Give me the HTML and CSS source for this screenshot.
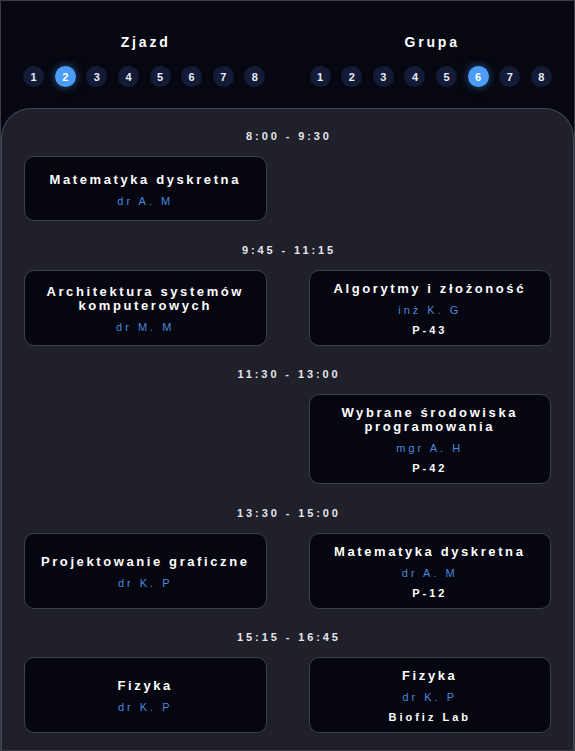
FILE: index.html
```html
<!DOCTYPE html>
<html lang="pl">
<head>
<meta charset="utf-8">
<title>Plan zajęć</title>
<link rel="stylesheet" href="styles.css">
</head>
<body>
<div class="app">
  <header class="picker">
    <div class="picker-col">
      <div class="picker-title">Zjazd</div>
      <div class="dots">
        <span class="dot">1</span><span class="dot active">2</span><span class="dot">3</span><span class="dot">4</span><span class="dot">5</span><span class="dot">6</span><span class="dot">7</span><span class="dot">8</span>
      </div>
    </div>
    <div class="picker-col">
      <div class="picker-title">Grupa</div>
      <div class="dots">
        <span class="dot">1</span><span class="dot">2</span><span class="dot">3</span><span class="dot">4</span><span class="dot">5</span><span class="dot active">6</span><span class="dot">7</span><span class="dot">8</span>
      </div>
    </div>
  </header>
  <main class="panel">
    <section class="slot">
      <div class="time">8:00 - 9:30</div>
      <div class="row">
        <div class="card"><div class="subject">Matematyka dyskretna</div><div class="teacher">dr A. M</div></div>
        <div class="empty"></div>
      </div>
    </section>
    <section class="slot">
      <div class="time">9:45 - 11:15</div>
      <div class="row">
        <div class="card"><div class="subject">Architektura systemów komputerowych</div><div class="teacher">dr M. M</div></div>
        <div class="card"><div class="subject">Algorytmy i złożoność</div><div class="teacher">inż K. G</div><div class="room">P-43</div></div>
      </div>
    </section>
    <section class="slot">
      <div class="time">11:30 - 13:00</div>
      <div class="row">
        <div class="empty"></div>
        <div class="card"><div class="subject">Wybrane środowiska programowania</div><div class="teacher">mgr A. H</div><div class="room">P-42</div></div>
      </div>
    </section>
    <section class="slot">
      <div class="time">13:30 - 15:00</div>
      <div class="row">
        <div class="card"><div class="subject">Projektowanie graficzne</div><div class="teacher">dr K. P</div></div>
        <div class="card"><div class="subject">Matematyka dyskretna</div><div class="teacher">dr A. M</div><div class="room">P-12</div></div>
      </div>
    </section>
    <section class="slot">
      <div class="time">15:15 - 16:45</div>
      <div class="row">
        <div class="card"><div class="subject">Fizyka</div><div class="teacher">dr K. P</div></div>
        <div class="card"><div class="subject">Fizyka</div><div class="teacher">dr K. P</div><div class="room">Biofiz Lab</div></div>
      </div>
    </section>
  </main>
</div>
</body>
</html>
```

FILE: styles.css
```css
* { box-sizing: border-box; }
html, body { margin: 0; padding: 0; background: #05060f; }
body { font-family: "Liberation Sans", Arial, sans-serif; color: #fff; }

.app {
  width: 575px;
  height: 751px;
  border: 1px solid #3a3b44;
  display: flex;
  flex-direction: column;
  overflow: hidden;
  background-color: #05060f;
  background-image:
    radial-gradient(ellipse 180px 90px at 0% 100%, rgba(30, 50, 110, 0.35), transparent 70%),
    radial-gradient(ellipse 180px 90px at 100% 100%, rgba(30, 50, 110, 0.35), transparent 70%),
    linear-gradient(rgba(255,255,255,0.008) 1px, transparent 1px),
    linear-gradient(90deg, rgba(255,255,255,0.008) 1px, transparent 1px);
  background-size: 100% 100%, 100% 100%, 4px 4px, 4px 4px;
}

.picker {
  display: grid;
  grid-template-columns: 1fr 1fr;
  padding: 31px 0 21px;
  flex: none;
}
.picker-col {
  display: flex;
  flex-direction: column;
  align-items: center;
}
.picker-title {
  font-size: 14px;
  font-weight: 700;
  letter-spacing: 2.8px;
  line-height: 20px;
  margin-right: -2.8px;
  color: #fff;
}
.dots {
  display: flex;
  gap: 10.6px;
  margin-top: 14px;
}
.dot {
  width: 21px;
  height: 21px;
  border-radius: 50%;
  background: #141b37;
  color: #e8ecf5;
  font-size: 11px;
  font-weight: 700;
  display: flex;
  align-items: center;
  justify-content: center;
}
.dot.active {
  background: #4b9df7;
  color: #fff;
  box-shadow: 0 0 8px rgba(75, 157, 247, 0.55);
}

.panel {
  flex: 1;
  background: #1f2029;
  border: 1px solid #45475a;
  border-bottom: none;
  border-radius: 30px 30px 0 0;
  padding: 20px 22px 0;
  display: flex;
  flex-direction: column;
  gap: 21.5px;
}

.time {
  text-align: center;
  font-size: 11px;
  font-weight: 700;
  line-height: 14px;
  letter-spacing: 2.9px;
  margin-right: -2.9px;
  color: #e6e6ee;
  margin-bottom: 13px;
}

.row {
  display: grid;
  grid-template-columns: 1fr 1fr;
  column-gap: 42px;
}

.card {
  background: #05060f;
  border: 1px solid #3d3f4e;
  border-radius: 10px;
  min-height: 65px;
  padding: 11px 12px 8px;
  display: flex;
  flex-direction: column;
  justify-content: center;
  align-items: center;
  text-align: center;
}
.subject {
  font-size: 13px;
  font-weight: 700;
  line-height: 14px;
  letter-spacing: 2.6px;
  color: #fff;
  margin-bottom: 8px;
}
.teacher {
  font-size: 11px;
  line-height: 13px;
  letter-spacing: 3px;
  color: #4a88dc;
}
.room {
  font-size: 11px;
  font-weight: 700;
  line-height: 13px;
  letter-spacing: 3px;
  color: #fff;
  margin-top: 7px;
}
```
